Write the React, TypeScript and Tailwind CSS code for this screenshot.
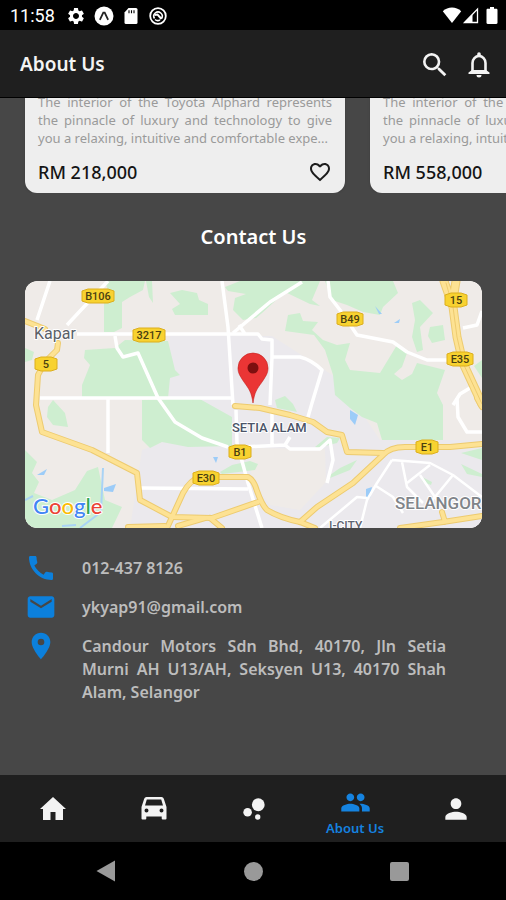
import type { ReactNode } from 'react';
import {
  MdBubbleChart,
  MdCall,
  MdFavoriteBorder,
  MdLocationOn,
  MdMail,
  MdPerson,
  MdSearch,
  MdSettings,
} from 'react-icons/md';

function StatusBar() {
  return (
    <div className="flex h-[30px] items-center justify-between bg-black pl-[10px] pr-2 text-white">
      <div className="flex items-center pt-px">
        <span className="w-[56px] font-[Roboto,sans-serif] text-lg leading-6">11:58</span>
        <MdSettings className="size-5" />
        <svg viewBox="0 0 20 20" className="ml-2 size-5" aria-hidden="true">
          <circle cx="10" cy="10" r="9.5" fill="#fff" />
          <path d="M6.2 13.2 9.3 6.6h1.4l3.1 6.6" fill="none" stroke="#222" strokeWidth="1.8" strokeLinecap="round" />
        </svg>
        <svg viewBox="0 0 14 16" className="ml-[10px] h-4 w-[14px]" aria-hidden="true">
          <path d="M4.5 0H12a1.5 1.5 0 0 1 1.5 1.5v13A1.5 1.5 0 0 1 12 16H2a1.5 1.5 0 0 1-1.5-1.5V4.500Z" fill="#fff" />
          <path d="M5 2.300v3M7.500 2.300v3M10 2.300v3" stroke="#000" strokeWidth="1.100" />
        </svg>
        <svg viewBox="0 0 18 18" className="ml-[11px] size-[18px]" fill="none" stroke="#fff" aria-hidden="true">
          <circle cx="9" cy="9" r="7.800" strokeWidth="1.800" />
          <path d="M5.500 11.500a4.200 4.200 0 1 1 7 0M6 12.500a4.200 4.200 0 0 0 5 .300" strokeWidth="1.600" />
          <path d="m5.500 8 3-.500 4 4.500" strokeWidth="2" />
        </svg>
      </div>
      <div className="flex items-center">
        <svg viewBox="0 0 20 16" className="h-4 w-5" aria-hidden="true">
          <path d="M10 16 .8 4.200C3.400 1.800 6.600.500 10 .500s6.600 1.300 9.200 3.700Z" fill="#fff" />
        </svg>
        <svg viewBox="0 0 17 17" className="h-[17px] w-[17px]" aria-hidden="true">
          <path d="M2.500 15.500 15.500 2v13.500Z" fill="none" stroke="#fff" strokeWidth="1.300" />
          <path d="M2 16 10.500 7.500V16Z" fill="#fff" />
        </svg>
        <svg viewBox="0 0 12 17" className="ml-[7px] h-[17px] w-3" aria-hidden="true">
          <path d="M4 0h4v1.800h2.300c.600 0 1.200.500 1.200 1.200v12.800c0 .700-.500 1.200-1.200 1.200H1.700c-.700 0-1.200-.500-1.200-1.200V3c0-.700.500-1.200 1.200-1.200H4Z" fill="#fff" />
        </svg>
      </div>
    </div>
  );
}

function BellIcon() {
  return (
    <svg viewBox="0 0 22 26" className="h-[26px] w-[22px]" aria-hidden="true">
      <path d="M4.500 20V11a6.500 7 0 0 1 13 0v9" fill="none" stroke="currentColor" strokeWidth="2.600" />
      <path d="M9.200 4V2a1.800 1.800 0 0 1 3.600 0v2ZM4 18h14l3.500 2.600V22H.500v-1.400ZM8.500 23h5a2.500 2.500 0 0 1-5 0Z" fill="currentColor" />
    </svg>
  );
}

function HouseIcon() {
  return (
    <svg viewBox="0 0 26 23" className="h-[23px] w-[26px]" fill="currentColor" aria-hidden="true">
      <path d="M13 0 26 12H23V23H15.500V15H10.500V23H3V12H0Z" />
    </svg>
  );
}

function CarIcon() {
  return (
    <svg viewBox="0 0 26 23" className="h-[23px] w-[26px]" fill="currentColor" aria-hidden="true">
      <path
        fillRule="evenodd"
        d="M5.500 0h15a2.400 2.400 0 0 1 2.300 1.700L25.500 10v11.500a1 1 0 0 1-1 1h-2.800a1 1 0 0 1-1-1V19.500H5.300v2a1 1 0 0 1-1 1H1.500a1 1 0 0 1-1-1V10L3.200 1.700A2.400 2.400 0 0 1 5.500 0ZM5.800 2.500 4 8.500h18l-1.800-6ZM5.500 11.500a2 2 0 1 0 0 4 2 2 0 0 0 0-4Zm15 0a2 2 0 1 0 0 4 2 2 0 0 0 0-4Z"
      />
    </svg>
  );
}

function CarCard({ price }: { price: string }) {
  return (
    <article className="w-80 shrink-0 rounded-b-xl bg-[#eeeeee] px-[13px] pb-[9px] shadow">
      <p className="whitespace-nowrap text-[13px] leading-[18px] text-[#9a9a9a]">
        <span className="block [text-align-last:justify]">The interior of the Toyota Alphard represents</span>
        <span className="block [text-align-last:justify]">the pinnacle of luxury and technology to give</span>
        <span className="block">you a relaxing, intuitive and comfortable expe...</span>
      </p>
      <div className="mt-[13px] flex h-6 items-center justify-between">
        <span className="text-[18px] font-medium text-[#141414]">{price}</span>
        <button type="button" aria-label="Add to favourites" className="text-[#1c1c1c]">
          <MdFavoriteBorder className="size-6" />
        </button>
      </div>
    </article>
  );
}

const greens = [
  '105,281 145,281 143,290 130,297 122,302 122,328 114,332 104,332 104,303 110,297',
  '146,281 152,281 153,303 149,297',
  '170,293 182,290 197,293 199,300 208,304 208,315 175,315 172,309 180,304',
  '225,287 240,281 320,281 312,300 320,306 310,304 285,292 262,313 256,318 243,320 233,310 235,298 246,294 228,291',
  '85,350 115,348 125,340 168,341 175,370 180,375 170,378 168,398 82,398 82,385 90,365 84,358',
  '325,281 393,281 398,293 383,307 380,315 363,312 347,305 332,300',
  '285,331 288,315 300,313 303,321 318,322 312,330 323,340 337,345 350,343 345,360 350,370 380,373 397,345 407,353 402,367 394,374 402,380 412,374 417,363 445,370 437,393 443,405 443,440 382,440 377,423 362,417 350,408 335,395 333,375 325,350 314,335',
  '412,303 420,300 433,313 420,327 423,350 417,352 412,337 415,320',
  '430,327 443,325 445,340 432,343 428,336',
  '142,400 198,398 232,417 232,446 188,447 162,442 150,448 142,440',
  '48,407 53,400 65,413 68,427 53,425 47,417',
  '25,450 37,462 32,473 39,482 34,493 52,500 75,490 87,471 98,467 105,500 122,507 112,528 25,528',
  '25,348 34,352 32,360 25,362',
  '220,472 232,465 250,461 258,464 255,470 222,474',
  '275,400 285,396 293,404 297,412 277,408',
  '315,447 327,437 340,438 337,443 317,448',
  '330,475 340,468 357,460 350,470 330,478',
  '461,453 482,448 482,460',
  '461,464 482,474 482,477 467,474',
  '420,476 432,482 431,485 423,482',
  '474,366 482,360 482,378',
];

const streets = [
  'M50 281 37 320M108 281 67 325M77 334H258L262 339 272 340V357L270 405',
  'M222 281 228 327 233 405M302 282 270 302 233 333M239 325 245 334',
  'M115 336 117 348 123 357 138 353 158 398 175 422 202 438 228 447',
  'M40 398H233M108 398V453M140 488 248 489M236 410 237 443 248 483 262 528',
  'M272 357 300 357Q312 360 322 370L312 403 308 417',
  'M328 281 330 297 340 310 357 335 393 342 407 352 427 360H450',
  'M463 328 477 325 482 311M453 405 460 394 475 385',
  'M240 447 285 445 290 449H320L330 440 333 460 327 483M272 408V444M285 445 290 437',
  'M457 398 458 417 467 432H482',
];

const lanes = [
  'M392 460 377 483 367 500 360 528M392 460 430 463 453 475 482 497M402 462 407 487 423 503',
  'M376 486 393 497 403 513M430 465 407 483M420 475 437 500M453 475 430 503M367 498 357 497 320 528',
];

const highways = [
  'M25 321 45 329M58 343 57 350 45 362 38 375 36 405 42 432 92 450 137 473 140 500 172 517 212 518 258 502',
  'M167 528 183 493Q190 480 200 477H248Q254 480 257 491 262 505 267 510 280 518 300 522L315 528',
  'M300 522 317 507 353 483 383 455Q390 447 405 447L450 447 482 444',
  'M235 406 260 408 290 415 313 422 327 432 342 435 347 452 383 453',
  'M400 528 443 522 482 516M442 512 445 522M128 527 165 526M178 526 205 518M210 518 222 528M477 398 482 407',
];

const waters = [
  '375,306 382,314 379,314',
  '394,323 400,319 399,323',
  '350,410 358,415 355,425 350,419',
  '366,489 372,487 370,498 366,498',
  '104,488 116,484 113,492 104,491',
  '37,475 47,469 44,475',
  '213,457 218,457 216,463',
];

const shields: [string, number, number, number][] = [
  ['B106', 98, 296, 32],
  ['3217', 149, 335, 32],
  ['5', 46, 364, 22],
  ['B49', 350, 319, 26],
  ['15', 456, 300, 22],
  ['E35', 460, 359, 26],
  ['B1', 240, 452, 22],
  ['E30', 206, 478, 26],
  ['E1', 427, 447, 22],
];

function AreaMap() {
  return (
    <svg
      viewBox="25 281 457 247"
      preserveAspectRatio="xMidYMid slice"
      className="block h-[247px] w-full rounded-xl bg-[#edebea] font-[Roboto,sans-serif]"
      role="img"
      aria-label="Map of Setia Alam, Selangor"
    >
      <path d="M25 281H482V528H25Z" fill="#efebe8" />
      <path d="M170 336H272L340 380 380 440 482 440V528H130L142 450 168 440V398Z" fill="#ebe9ed" />
      <path d="M248 448 325 449 326 482 300 510 270 505 252 480Z" fill="#efebe8" />
      {greens.map((points) => (
        <polygon key={points} points={points} fill="#ceeed0" />
      ))}
      {waters.map((points) => (
        <polygon key={points} points={points} fill="#9cccf8" />
      ))}
      <path d="M103 468 101 512 80 528M25 500 33 496M62 526 76 525" fill="none" stroke="#a9d3f5" strokeWidth="2" />
      <g fill="none" stroke="#fff" strokeLinejoin="round">
        {streets.map((d) => (
          <path key={d} d={d} strokeWidth="3.500" />
        ))}
        {lanes.map((d) => (
          <path key={d} d={d} strokeWidth="2.500" />
        ))}
      </g>
      <g fill="none" strokeLinejoin="round" strokeLinecap="round">
        {highways.map((d) => (
          <path key={d} d={d} stroke="#edcb70" strokeWidth="6" />
        ))}
        <path d="M444 281 453 307 457 337 463 363 482 404M456 281 453 300" stroke="#edcb70" strokeWidth="9" />
        {highways.map((d) => (
          <path key={d} d={d} stroke="#fde293" strokeWidth="4" />
        ))}
        <path d="M444 281 453 307 457 337 463 363 482 404M456 281 453 300" stroke="#fde293" strokeWidth="7" />
        <path d="M446 283 453 307 457 337 463 363 482 404" stroke="#edcb70" strokeWidth="1" />
      </g>
      {shields.map(([label, x, y, w]) => (
        <g key={label}>
          <path
            d={`M${x - w / 2} ${y - 5}L${x - w / 2 + 6} ${y - 7}H${x + w / 2 - 6}L${x + w / 2} ${y - 5}V${y + 5}L${x + w / 2 - 6} ${y + 7}H${x - w / 2 + 6}L${x - w / 2} ${y + 5}Z`}
            fill="#f8d230"
            stroke="#dcae1c"
          />
          <text x={x} y={y + 4} textAnchor="middle" fontSize="11" fontWeight="500" fill="#4a3f10">
            {label}
          </text>
        </g>
      ))}
      <g stroke="#fff" strokeWidth="2" paintOrder="stroke" strokeLinejoin="round">
        <text x="34" y="339" fontSize="16" fill="#5a6068">Kapar</text>
        <text x="232" y="432" fontSize="13" fontWeight="500" fill="#4b5468">SETIA ALAM</text>
        <text x="395" y="509" fontSize="17" fontWeight="500" fill="#808489">SELANGOR</text>
        <text x="329" y="530" fontSize="12" fontWeight="500" fill="#5f6672">I-CITY</text>
      </g>
      <text x="33" y="514" fontSize="22" fontWeight="500" fontFamily="Lato, sans-serif" stroke="#fff" strokeWidth="2" paintOrder="stroke">
        <tspan fill="#4285f4">G</tspan>
        <tspan fill="#ea4335">o</tspan>
        <tspan fill="#fbbc05">o</tspan>
        <tspan fill="#4285f4">g</tspan>
        <tspan fill="#34a853">l</tspan>
        <tspan fill="#ea4335">e</tspan>
      </text>
      <path
        d="M253 403C251.500 392 249 389 244 382 240 376 238 373 238 368a15 15 0 0 1 30 0C268 373 266 376 262 382 257 389 254.500 392 253 403Z"
        fill="#ea3535"
        stroke="#c5221f"
        strokeWidth="0.600"
      />
      <circle cx="253" cy="368" r="5.500" fill="#7d0f0f" />
    </svg>
  );
}

function ContactRow({ icon, children }: { icon: ReactNode; children: ReactNode }) {
  return (
    <li className="flex items-start">
      <span className="w-[57px] shrink-0 text-[#0c80dc]">{icon}</span>
      <div className="min-w-0 flex-1 pt-[5px]">{children}</div>
    </li>
  );
}

function TabButton({ label, icon, active = false }: { label: string; icon: ReactNode; active?: boolean }) {
  return (
    <button
      type="button"
      aria-label={label}
      aria-current={active ? 'page' : undefined}
      className={
        active
          ? 'flex flex-1 flex-col items-center justify-end pb-1 text-[#1583e0]'
          : 'flex flex-1 flex-col items-center justify-center text-[#f3f3f3]'
      }
    >
      {icon}
      {active && <span className="text-[13px] font-semibold leading-5">{label}</span>}
    </button>
  );
}

export default function App() {
  return (
    <div className="flex min-h-screen flex-col bg-[#474747] font-['Noto_Sans',sans-serif]">
      <StatusBar />
      <header className="flex h-[68px] items-center justify-between border-b border-black bg-[#1f1f1f] pl-5 pr-4 pt-[2px] text-[#f3f3f3]">
        <h1 className="text-[19px] font-semibold">About Us</h1>
        <div className="flex items-center gap-[17px]">
          <button type="button" aria-label="Search">
            <MdSearch className="size-8" />
          </button>
          <button type="button" aria-label="Notifications">
            <BellIcon />
          </button>
        </div>
      </header>

      <main className="flex-1">
        <section aria-label="Cars" className="flex h-[95px] items-end gap-[25px] overflow-hidden pl-[25px]">
          <CarCard price="RM 218,000" />
          <CarCard price="RM 558,000" />
        </section>

        <section className="pl-[25px] pr-6 pt-[29px]">
          <h2 className="text-center text-xl font-semibold leading-[30px] text-white">Contact Us</h2>
          <div className="mt-[29px] overflow-hidden rounded-xl">
            <AreaMap />
          </div>
          <ul className="mt-6 flex flex-col gap-[7px] pr-9 text-base font-semibold leading-[23px] text-[#bdbdbd]">
            <ContactRow icon={<MdCall className="size-8" />}>
              <a href="tel:0124378126">012-437 8126</a>
            </ContactRow>
            <ContactRow icon={<MdMail className="size-8" />}>
              <a href="mailto:ykyap91@gmail.com">ykyap91@gmail.com</a>
            </ContactRow>
            <ContactRow icon={<MdLocationOn className="size-8" />}>
              <address className="text-justify not-italic">
                Candour Motors Sdn Bhd, 40170, Jln Setia Murni AH U13/AH, Seksyen U13, 40170 Shah Alam, Selangor
              </address>
            </ContactRow>
          </ul>
        </section>
      </main>

      <nav aria-label="Main" className="flex h-[67px] bg-[#1f1f1f] pl-[3px]">
        <TabButton label="Home" icon={<HouseIcon />} />
        <TabButton label="Cars" icon={<CarIcon />} />
        <TabButton label="Services" icon={<MdBubbleChart className="size-8" />} />
        <TabButton
          label="About Us"
          active
          icon={
            <svg viewBox="0 0 24 24" className="size-[31px]" fill="currentColor" aria-hidden="true">
              <path d="M16 11c1.660 0 2.990-1.340 2.990-3S17.660 5 16 5s-3 1.340-3 3 1.340 3 3 3zm-8 0c1.660 0 2.990-1.340 2.990-3S9.660 5 8 5 5 6.340 5 8s1.340 3 3 3zm0 2c-2.330 0-7 1.170-7 3.500V19h14v-2.500c0-2.330-4.670-3.500-7-3.500zm8 0c-.290 0-.620.020-.970.050 1.160.840 1.970 1.970 1.970 3.450V19h6v-2.500c0-2.330-4.670-3.500-7-3.500z" />
            </svg>
          }
        />
        <TabButton label="Profile" icon={<MdPerson className="size-8" />} />
      </nav>

      <div className="flex h-[58px] items-center bg-black px-[33px] text-[#999999]">
        <button type="button" aria-label="Back" className="flex flex-1 justify-center">
          <svg viewBox="0 0 22 22" className="size-[22px]" fill="currentColor" aria-hidden="true">
            <path d="M20 .500v21L1.500 11Z" />
          </svg>
        </button>
        <button type="button" aria-label="Home screen" className="flex flex-1 justify-center">
          <span className="size-[19px] rounded-full bg-[#999999]" />
        </button>
        <button type="button" aria-label="Recent apps" className="flex flex-1 justify-center">
          <span className="size-[19px] rounded-xs bg-[#999999]" />
        </button>
      </div>
    </div>
  );
}
